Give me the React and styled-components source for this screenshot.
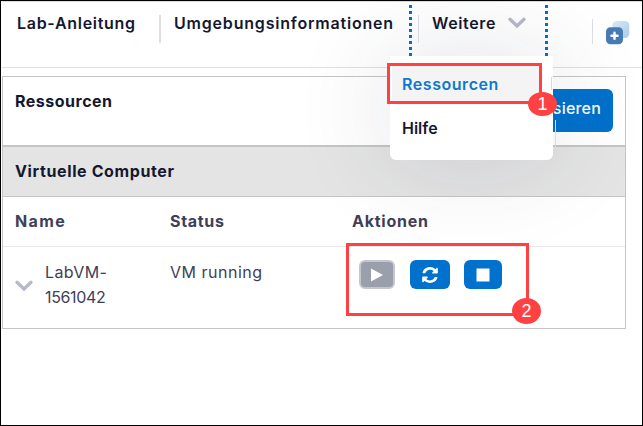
import React from "react";
import styled, { createGlobalStyle } from "styled-components";

const Global = createGlobalStyle`
  * { box-sizing: border-box; }
  body { margin: 0; background: #fff; font-family: "Inter", "Open Sans", sans-serif; }
`;

const Frame = styled.div`
  position: relative;
  width: 643px;
  height: 426px;
  padding: 0 0 0 1px;
  border: 1px solid #000;
  background: #fff;
  overflow: hidden;
`;

const Label = styled.span`
  display: inline-block;
  font-size: ${(p) => p.$size || 16}px;
  font-weight: ${(p) => p.$weight || 600};
  line-height: 24px;
  letter-spacing: ${(p) => p.$track || 0}px;
  color: ${(p) => p.$color || "#14182f"};
  white-space: nowrap;
`;

const Nav = styled.nav`
  display: flex;
  align-items: flex-start;
  height: 67px;
  padding: 3px 0 0 15px;
  border-top: 1px solid #dcdcdf;
  border-bottom: 1px solid #dedfe4;
`;

const NavItem = styled.div`
  flex: none;
  width: ${(p) => p.$width}px;
  padding-top: 6px;
`;

const Divider = styled.div`
  flex: none;
  width: ${(p) => p.$thick || 1}px;
  height: ${(p) => p.$height || 28}px;
  margin: ${(p) => p.$top || 10}px ${(p) => p.$after}px 0 0;
  background: #dedfe6;
`;

const DropTrigger = styled.div`
  flex: none;
  display: flex;
  width: 139px;
  height: 52px;
  margin-right: 44px;
  justify-content: space-between;
`;

const Dots = styled.div`
  flex: none;
  width: 3px;
  height: 51px;
  background: repeating-linear-gradient(#0071cc 0 3px, transparent 3px 6px);
`;

const TriggerBody = styled.div`
  flex: 1;
  display: flex;
  padding-left: 6px;
`;

const ChevronSvg = styled.svg`
  flex: none;
  display: block;
  width: 18px;
  height: 12px;
  margin-top: ${(p) => p.$top || 0}px;
`;

const CopyIcon = styled.svg`
  flex: none;
  display: block;
  width: 24px;
  height: 24px;
  margin-top: 16px;
`;

const Card = styled.section`
  width: 624px;
  height: 253px;
  margin-top: 8px;
  border: 1px solid #c5c5c5;
`;

const CardHead = styled.header`
  display: flex;
  justify-content: space-between;
  height: 70px;
  padding: 12px 12px 0;
  border-bottom: 2px solid #c5c5c5;
`;

const RefreshButton = styled.button`
  width: 140px;
  height: 43px;
  padding: 0 12px 6px 0;
  border: 0;
  border-radius: 6px;
  background: #0071cc;
  text-align: right;
  font-family: inherit;
`;

const Band = styled.div`
  height: 50px;
  padding: 12px 12px;
  border-bottom: 1px solid #c5c5c5;
  background: #e4e4e4;
`;

const Row = styled.div`
  display: grid;
  grid-template-columns: 155px 182px 1fr;
  padding: ${(p) => (p.$line ? 12 : 13)}px 12px 0;
  height: ${(p) => p.$height}px;
  border-bottom: ${(p) => (p.$line ? "1px solid #e8e8ed" : "0")};
`;

const NameCell = styled.div`
  display: flex;
  gap: 12px;
`;

const NameLines = styled.div`
  display: flex;
  flex-direction: column;
  gap: 1px;
`;

const Actions = styled.div`
  display: flex;
  align-items: flex-start;
  padding-left: 7px;
`;

const ActionButton = styled.button`
  display: flex;
  align-items: center;
  justify-content: center;
  width: ${(p) => p.$width}px;
  height: 29px;
  margin-right: ${(p) => p.$gap || 0}px;
  padding: 0;
  border: ${(p) => (p.$off ? "2px solid #c6c7cd" : "0")};
  border-radius: 6px;
  background: ${(p) => (p.$off ? "#9b9eab" : "#0071cc")};
`;

const Menu = styled.div`
  position: absolute;
  left: 389px;
  top: 55px;
  width: 163px;
  height: 104px;
  padding: 9px 3px 0 2px;
  border-radius: 0 0 6px 6px;
  background: #fff;
  box-shadow: 0 0 100px rgba(45, 48, 75, 0.14);
`;

const MenuItem = styled.div`
  height: ${(p) => (p.$active ? 38 : 48)}px;
  width: 149px;
  padding: ${(p) => (p.$active ? "7px" : "13px")} 10px 0;
  background: ${(p) => (p.$active ? "#f4f4f4" : "transparent")};
`;

const Sliver = styled.div`
  position: absolute;
  left: ${(p) => p.$x}px;
  top: ${(p) => p.$y}px;
  width: 1px;
  height: ${(p) => p.$h}px;
  background: #d9dae3;
`;

const Callout = styled.div`
  position: absolute;
  left: ${(p) => p.$x}px;
  top: ${(p) => p.$y}px;
  width: ${(p) => p.$w}px;
  height: ${(p) => p.$h}px;
  border: 3px solid #ff4141;
`;

const Badge = styled.div`
  position: absolute;
  left: ${(p) => p.$x}px;
  top: ${(p) => p.$y}px;
  width: 29px;
  height: ${(p) => p.$h}px;
  border-radius: 50%;
  background: #ff4141;
  color: #fff;
  font: 18px/${(p) => p.$h}px "Liberation Sans", Arial, sans-serif;
  text-align: center;
`;

const Chevron = ({ top }) => (
  <ChevronSvg $top={top} viewBox="0 0 18 12">
    <path d="M2 2.3 9 9 16 2.3" fill="none" stroke="#b7b8c7" strokeWidth="3.3" strokeLinecap="round" />
  </ChevronSvg>
);

export default function App() {
  return (
    <>
      <Global />
      <Frame>
        <Nav>
          <NavItem $width={142}><Label $track={0.7}>Lab-Anleitung</Label></NavItem>
          <Divider $thick={2} $after={13} />
          <NavItem $width={235}><Label $track={0.8}>Umgebungsinformationen</Label></NavItem>
          <DropTrigger>
            <Dots />
            <TriggerBody>
              <Divider $after={13} />
              <NavItem $width={76}><Label $track={0.65}>Weitere</Label></NavItem>
              <Chevron top={12} />
            </TriggerBody>
            <Dots />
          </DropTrigger>
          <Divider $height={25} $top={14} $after={13} />
          <CopyIcon viewBox="0 0 24 24">
            <defs>
              <linearGradient id="sheet" x1="0" y1="0" x2="1" y2="1">
                <stop offset="0" stopColor="#d9e9f6" />
                <stop offset="1" stopColor="#a9cbe8" />
              </linearGradient>
            </defs>
            <rect x="6.5" y="0" width="16.8" height="17" rx="4.5" fill="url(#sheet)" />
            <rect x="0" y="6.3" width="17" height="17" rx="4.5" fill="#467bb4" />
            <path d="M8.5 11.8v6M5.5 14.8h6" stroke="#fff" strokeWidth="2.5" strokeLinecap="round" />
          </CopyIcon>
        </Nav>

        <Card>
          <CardHead>
            <Label $weight={700} $track={0.5}>Ressourcen</Label>
            <RefreshButton><Label $weight={500} $color="#fff" $track={0.2}>Aktualisieren</Label></RefreshButton>
          </CardHead>
          <Band><Label $weight={700} $track={0.62}>Virtuelle Computer</Label></Band>
          <Row $height={50} $line>
            <Label $weight={700} $color="#3f4058" $track={1.4}>Name</Label>
            <Label $weight={700} $color="#3f4058" $track={0.7}>Status</Label>
            <Label $weight={700} $color="#3f4058" $track={0.75}>Aktionen</Label>
          </Row>
          <Row $height={81}>
            <NameCell>
              <Chevron top={20} />
              <NameLines>
                <Label $weight={400} $color="#3f4058" $track={0.4}>LabVM-</Label>
                <Label $weight={400} $color="#3f4058" $track={-0.35}>1561042</Label>
              </NameLines>
            </NameCell>
            <Label $weight={400} $color="#3f4058" $track={0.5}>VM running</Label>
            <Actions>
              <ActionButton $width={36} $gap={15} $off>
                <svg width="14" height="14" viewBox="0 0 14 14"><path d="M1 0.5 13 7 1 13.5Z" fill="#fff" /></svg>
              </ActionButton>
              <ActionButton $width={40} $gap={14}>
                <svg width="16" height="16" viewBox="0 0 512 512">
                  <path fill="#fff" d="M371 134c-66-66-173-63-235 7-12 14-21 30-28 47-2 7-8 12-16 12H35c-11 0-19-10-16-21C42 71 139 0 256 0c67 0 128 26 173 69l36-36c15-15 41-4 41 17v134c0 13-11 24-24 24H348c-21 0-32-26-17-41zM30 304h134c21 0 32 26 17 41l-41 41c67 64 172 62 235-9 12-14 22-30 29-47 3-7 9-12 16-12h57c11 0 19 10 16 21-23 106-120 173-237 173-67 0-128-26-173-69l-36 36c-15 15-41 4-41-17V328c0-13 11-24 24-24z" />
                </svg>
              </ActionButton>
              <ActionButton $width={38}>
                <svg width="14" height="14" viewBox="0 0 14 14"><path d="M.5.5h13v13H.5z" fill="#fff" /></svg>
              </ActionButton>
            </Actions>
          </Row>
        </Card>

        <Menu>
          <MenuItem $active><Label $color="#0f78cc" $track={0.55}>Ressourcen</Label></MenuItem>
          <MenuItem><Label>Hilfe</Label></MenuItem>
        </Menu>
        <Sliver $x={550} $y={76} $h={13} />
        <Sliver $x={554} $y={119} $h={27} />
        <Callout $x={386} $y={62} $w={155} $h={41} />
        <Badge $x={527} $y={91} $h={24}>1</Badge>
        <Callout $x={345} $y={242} $w={183} $h={73} />
        <Badge $x={511} $y={297} $h={26}>2</Badge>
      </Frame>
    </>
  );
}
